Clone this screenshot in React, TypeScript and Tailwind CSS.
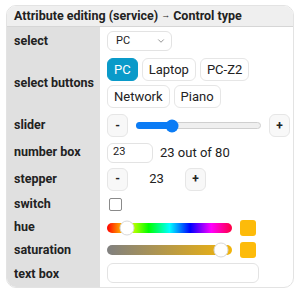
import { ChevronDown } from "lucide-react";

const choices = ["PC", "Laptop", "PC-Z2", "Network", "Piano"];

function Row({ label, h, children }: { label: string; h: string; children?: React.ReactNode }) {
  return (
    <div className={`flex ${h}`}>
      <div className="flex w-[93px] shrink-0 items-center whitespace-nowrap bg-[#e0e0e0] px-[7px] text-[12.5px] font-bold text-[#222]">
        {label}
      </div>
      <div className="flex flex-1 items-center pl-[7px]">{children}</div>
    </div>
  );
}

function SmallBtn({ children }: { children: string }) {
  return (
    <div className="flex h-[23px] w-[21px] shrink-0 items-center justify-center rounded-[6px] border border-[#e6e6e6] bg-[#f8f8f8] text-[12px] font-bold text-[#222]">
      {children}
    </div>
  );
}

export default function App() {
  const value = 23;
  const max = 80;

  return (
    <div className="h-[291px] w-[300px] bg-white pl-[6px] pt-[5px] font-['Roboto',sans-serif]">
      <div className="w-[288px] overflow-hidden rounded-[10px] border border-[#e3e3e3]">
        {/* header */}
        <div className="flex h-[21px] items-center gap-[3px] border-b border-[#d6d6d6] bg-[#efefef] px-[7px] text-[12.5px] font-bold text-[#222]">
          <span>Attribute editing (service)</span>
          <span className="text-[9px]">→</span>
          <span>Control type</span>
        </div>

        <Row label="select" h="h-[28px]">
          <div className="flex h-[20px] w-[65px] items-center justify-between rounded-[6px] border border-[#e3e3e3] bg-white pl-[8px] pr-[5px] text-[11px] text-[#222]">
            PC
            <ChevronDown size={10} strokeWidth={1.5} className="text-[#555]" />
          </div>
        </Row>

        <Row label="select buttons" h="h-[56px]">
          <div className="flex flex-wrap gap-x-[4px] gap-y-[4px] pr-2">
            {choices.map((c, i) => (
              <div
                key={c}
                className={
                  i === 0
                    ? "flex h-[23px] items-center rounded-[6px] border border-[#0a9ac9] bg-[#0a9ac9] px-[6px] text-[13px] text-white"
                    : "flex h-[23px] items-center rounded-[6px] border border-[#e6e6e6] bg-white px-[6px] text-[13px] text-[#222]"
                }
              >
                {c}
              </div>
            ))}
          </div>
        </Row>

        <Row label="slider" h="h-[29px]">
          <SmallBtn>-</SmallBtn>
          <div className="relative mx-[8px] h-[7px] flex-1 rounded-full border border-[#cfcfcf] bg-[#efefef]">
            <div
              className="absolute -left-px -top-px h-[7px] rounded-full bg-[#0b7cf5]"
              style={{ width: `${(value / max) * 100}%` }}
            />
            <div
              className="absolute top-1/2 h-[13px] w-[13px] -translate-x-1/2 -translate-y-1/2 rounded-full bg-[#0b7cf5]"
              style={{ left: `${(value / max) * 100}%` }}
            />
          </div>
          <div className="mr-[3px]">
            <SmallBtn>+</SmallBtn>
          </div>
        </Row>

        <Row label="number box" h="h-[25px]">
          <div className="flex h-[20px] w-[46px] items-center rounded-[6px] border border-[#e3e3e3] pl-[5px] text-[11px] text-[#222]">
            {value}
          </div>
          <span className="ml-[7px] text-[13px] text-[#222]">
            {value} out of {max}
          </span>
        </Row>

        <Row label="stepper" h="h-[28px]">
          <SmallBtn>-</SmallBtn>
          <span className="w-[57px] text-center text-[13px] text-[#222]">{value}</span>
          <SmallBtn>+</SmallBtn>
        </Row>

        <Row label="switch" h="h-[23px]">
          <div className="ml-[2px] h-[13px] w-[13px] rounded-[2px] border border-[#8a8a8a] bg-white" />
        </Row>

        <Row label="hue" h="h-[23px]">
          <div className="relative h-[10px] w-[125px] rounded-full bg-[linear-gradient(to_right,#ff0000,#ffff00,#00ff00,#00ffff,#0000ff,#ff00ff,#ff0040)]">
            <div className="absolute left-[20px] top-1/2 h-[15px] w-[15px] -translate-x-1/2 -translate-y-1/2 rounded-full border border-[#d8d8d8] bg-white" />
          </div>
          <div className="ml-[8px] h-[16px] w-[16px] rounded-[3px] bg-[#fdbb0a]" />
        </Row>

        <Row label="saturation" h="h-[22px]">
          <div className="relative h-[10px] w-[125px] rounded-full bg-[linear-gradient(to_right,#808080,#f2b40a)]">
            <div className="absolute left-[114px] top-1/2 h-[15px] w-[15px] -translate-x-1/2 -translate-y-1/2 rounded-full border border-[#d8d8d8] bg-white" />
          </div>
          <div className="ml-[8px] h-[16px] w-[16px] rounded-[3px] bg-[#fdbb0a]" />
        </Row>

        <Row label="text box" h="h-[26px]">
          <div className="mb-[3px] h-[20px] w-[152px] rounded-[6px] border border-[#e3e3e3] bg-white" />
        </Row>
      </div>
    </div>
  );
}
